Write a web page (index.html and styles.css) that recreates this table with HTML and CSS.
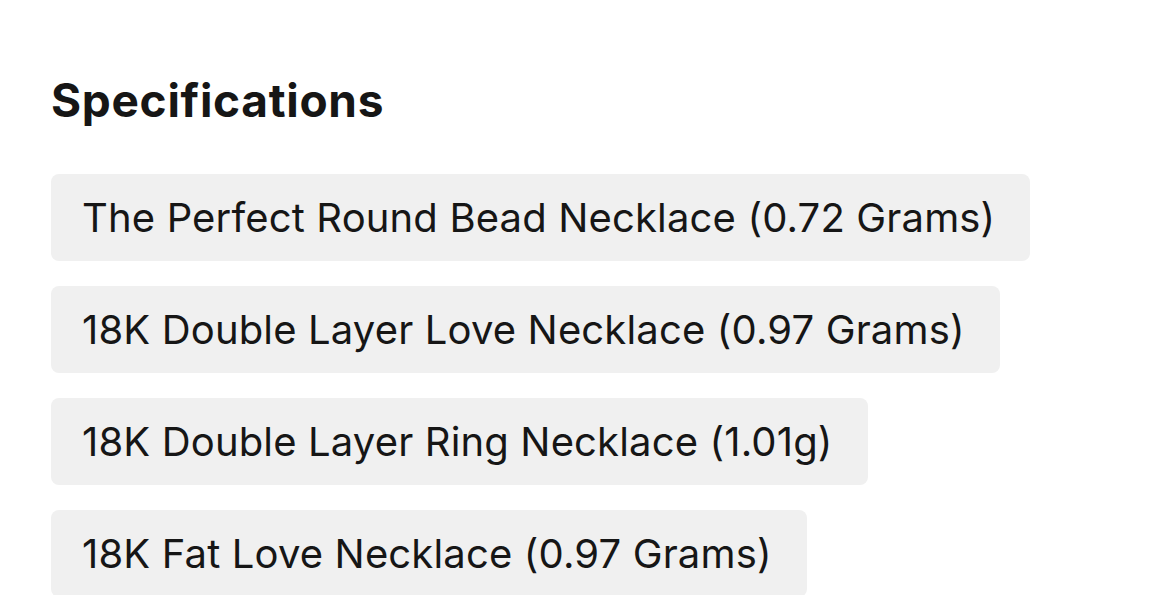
FILE: index.html
```html
<!DOCTYPE html>
<html>
<head>
<meta charset="utf-8">
<link rel="stylesheet" href="styles.css">
</head>
<body>
<section class="specs">
  <h2 class="specs-title">Specifications</h2>
  <div class="spec-list">
    <div class="spec-chip">The Perfect Round Bead Necklace (0.72 Grams)</div>
    <div class="spec-chip">18K Double Layer Love Necklace (0.97 Grams)</div>
    <div class="spec-chip">18K Double Layer Ring Necklace (1.01g)</div>
    <div class="spec-chip">18K Fat Love Necklace (0.97 Grams)</div>
  </div>
</section>
</body>
</html>
```

FILE: styles.css
```css
html, body {
  margin: 0;
  padding: 0;
  background: #ffffff;
}
body {
  font-family: Inter, "Noto Sans", sans-serif;
  color: #161616;
  overflow: hidden;
  height: 595px;
}
.specs {
  padding: 0 0 0 51px;
}
.specs-title {
  margin: 0;
  padding-top: 73px;
  font-size: 46px;
  line-height: 54px;
  font-weight: 700;
  letter-spacing: 0.7px;
}
.spec-list {
  display: flex;
  flex-direction: column;
  align-items: flex-start;
  gap: 25px;
  margin-top: 47px;
}
.spec-chip {
  background: #f0f0f0;
  border-radius: 8px;
  height: 87px;
  box-sizing: border-box;
  padding: 0 35px 0 31px;
  display: flex;
  align-items: center;
  font-size: 40px;
  font-weight: 400;
  letter-spacing: 0.15px;
}
```
